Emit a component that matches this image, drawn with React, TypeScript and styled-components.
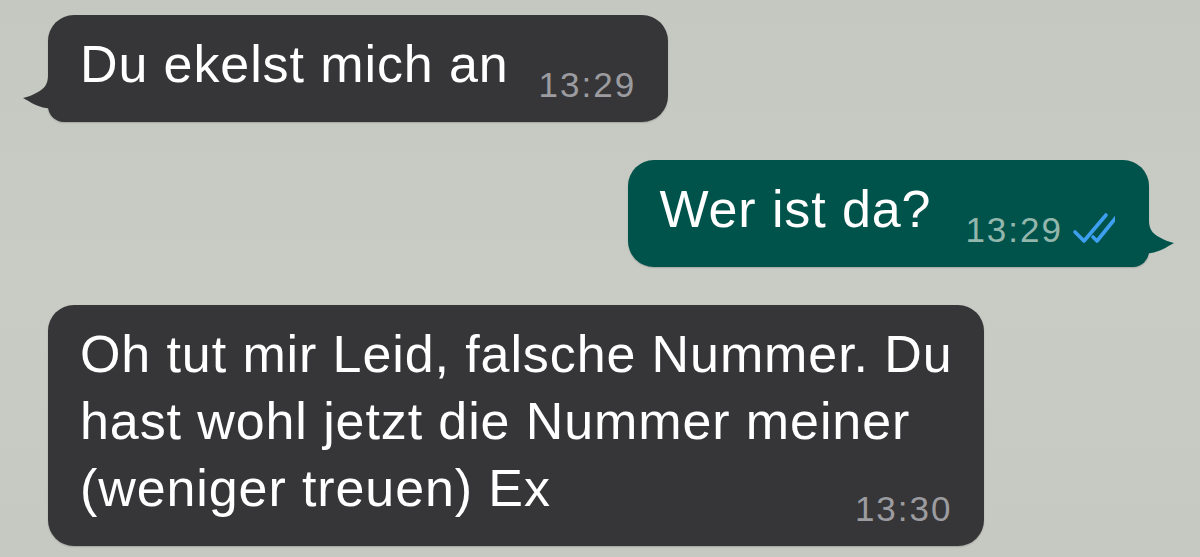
import React from "react";
import styled, { createGlobalStyle, css } from "styled-components";

type Side = "in" | "out";

interface Message {
  id: number;
  side: Side;
  lines: string[];
  time: string;
  tail?: boolean;
  read?: boolean;
  stacked?: boolean;
}

const messages: Message[] = [
  { id: 1, side: "in", lines: ["Du ekelst mich an"], time: "13:29", tail: true },
  { id: 2, side: "out", lines: ["Wer ist da?"], time: "13:29", tail: true, read: true },
  {
    id: 3,
    side: "in",
    lines: [
      "Oh tut mir Leid, falsche Nummer. Du",
      "hast wohl jetzt die Nummer meiner",
      "(weniger treuen) Ex",
    ],
    time: "13:30",
    stacked: true,
  },
];

const GlobalStyle = createGlobalStyle`
  html, body {
    margin: 0;
    padding: 0;
    background: #c7c9c3;
  }
  body {
    font-family: "Liberation Sans", Arial, sans-serif;
  }
`;

// little speech tail drawn at the bottom corner of a bubble
const Tail = ({ side, color }: { side: Side; color: string }) => {
  return (
    <TailSvg $side={side} width="60" height="56" viewBox="-26 -56 60 56">
      <path
        d="M0 -56 L0 -46 C0 -38 -4 -33 -10 -30 C-15 -27 -20 -25 -25 -24 C-18 -20 -10 -15 -2 -14 C3 -13.5 7 -12 10 -10 L34 -10 L34 -56 Z"
        fill={color}
      />
    </TailSvg>
  );
};

const ReadTicks = () => {
  return (
    <Ticks width="50" height="32" viewBox="0 0 50 32">
      <path d="M3 20 L12 29 L34 3" />
      <path d="M21 25 L25 29 L46 3" />
    </Ticks>
  );
};

const Bubble = ({ msg }: { msg: Message }) => {
  const color = msg.side === "out" ? "#00534a" : "#363638";
  return (
    <BubbleBox $side={msg.side} $tail={!!msg.tail} $stacked={!!msg.stacked}>
      <Text>
        {msg.lines.map((line, i) => (
          <Line key={i}>{line}</Line>
        ))}
      </Text>
      <Meta $side={msg.side} $stacked={!!msg.stacked}>
        <Time $side={msg.side}>{msg.time}</Time>
        {msg.read && <ReadTicks />}
      </Meta>
      {msg.tail && <Tail side={msg.side} color={color} />}
    </BubbleBox>
  );
};

export default function App() {
  return (
    <>
      <GlobalStyle />
      <Chat>
        {messages.map((m) => (
          <Bubble key={m.id} msg={m} />
        ))}
      </Chat>
    </>
  );
}

const Chat = styled.div`
  display: flex;
  flex-direction: column;
  gap: 38px;
  width: 1200px;
  height: 557px;
  box-sizing: border-box;
  padding: 15px 51px 0 48px;
  background: linear-gradient(180deg, #c5c7c1 0%, #c9cbc5 50%, #c6c8c2 100%);
  overflow: hidden;
`;

const BubbleBox = styled.div<{ $side: Side; $tail: boolean; $stacked: boolean }>`
  position: relative;
  display: ${(p) => (p.$stacked ? "grid" : "flex")};
  align-items: flex-end;
  box-sizing: border-box;
  padding: 16px 32px 24px 32px;
  border-radius: 26px;
  color: #ffffff;
  box-shadow: 0 1px 1.5px rgba(0, 0, 0, 0.18);
  ${(p) =>
    p.$side === "in"
      ? css`
          align-self: flex-start;
          background: #363638;
          ${p.$tail && "border-bottom-left-radius: 16px;"}
        `
      : css`
          align-self: flex-end;
          background: #00534a;
          padding: 16px 27px 24px 31px;
          ${p.$tail && "border-bottom-right-radius: 16px;"}
        `}
  ${(p) =>
    p.$stacked &&
    css`
      grid-template-areas: "cell";
      & > * {
        grid-area: cell;
      }
    `}
`;

const Text = styled.div`
  display: flex;
  flex-direction: column;
  align-items: flex-start;
  font-size: 52px;
  line-height: 67px;
  letter-spacing: 0.9px;
`;

const Line = styled.span`
  white-space: pre;
`;

const Meta = styled.div<{ $side: Side; $stacked: boolean }>`
  display: flex;
  align-items: flex-end;
  gap: 9px;
  margin-left: ${(p) => (p.$stacked ? "0" : p.$side === "out" ? "34px" : "30px")};
  margin-bottom: -4px;
  justify-self: end;
  align-self: end;
`;

const Time = styled.span<{ $side: Side }>`
  font-size: 35px;
  line-height: 35px;
  letter-spacing: 2px;
  color: ${(p) => (p.$side === "out" ? "#93b6ad" : "#9c9ca0")};
`;

const Ticks = styled.svg`
  margin-bottom: 3px;
  fill: none;
  stroke: #3d9ff0;
  stroke-width: 3.6;
  stroke-linecap: round;
  stroke-linejoin: round;
`;

const TailSvg = styled.svg<{ $side: Side }>`
  position: absolute;
  bottom: 0;
  ${(p) =>
    p.$side === "in"
      ? css`
          left: -26px;
        `
      : css`
          right: -26px;
          transform: scaleX(-1);
        `}
`;
